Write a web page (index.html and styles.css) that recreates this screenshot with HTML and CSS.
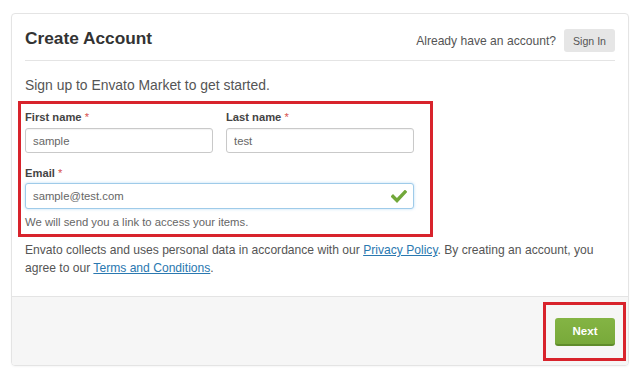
FILE: index.html
```html
<!DOCTYPE html>
<html lang="en">
<head>
  <meta charset="UTF-8" />
  <title>Create Account</title>
  <link rel="stylesheet" href="styles.css">
</head>
<body>

  <div class="card">
    <div class="card-head">
      <h1>Create Account</h1>
      <div class="signin">
        <span>Already have an account?</span>
        <button class="btn-signin">Sign In</button>
      </div>
    </div>

    <div class="card-body">
      <p class="intro">Sign up to Envato Market to get started.</p>

      <!-- highlighted group -->
      <div class="marked fields">
        <div class="row">
          <div class="field">
            <label>First name <span class="req">*</span></label>
            <input type="text" value="sample" />
          </div>
          <div class="field">
            <label>Last name <span class="req">*</span></label>
            <input type="text" value="test" />
          </div>
        </div>

        <div class="field email">
          <label>Email <span class="req">*</span></label>
          <div class="input-wrap">
            <input type="email" class="valid" value="sample@test.com" />
            <svg class="tick" viewBox="0 0 16 13" width="16" height="13">
              <polyline points="2,6.5 6,10.5 14,2" fill="none" stroke="#72a83a" stroke-width="3.4" stroke-linecap="square" />
            </svg>
          </div>
        </div>

        <p class="hint">We will send you a link to access your items.</p>
      </div>

      <p class="legal">
        Envato collects and uses personal data in accordance with our <a href="#">Privacy Policy</a>. By creating an account, you<br>
        agree to our <a href="#">Terms and Conditions</a>.
      </p>
    </div>

    <div class="card-foot">
      <div class="marked">
        <button class="btn-next">Next</button>
      </div>
    </div>
  </div>

</body>
</html>
```

FILE: styles.css
```css
:root {
  --text: #555;
  --title: #333;
  --line: #e4e4e4;
  --mark: #d8232c;
  --green: #7cad3d;
  --link: #2a78b0;
}
* {
  box-sizing: border-box;
}
body {
  margin: 0;
  padding: 13px 11px 11px;
  background: #fff;
  color: var(--text);
  font-family: "Liberation Sans", Arial, sans-serif;
}
.card {
  border: 1px solid var(--line);
  border-radius: 4px;
  overflow: hidden;
  box-shadow: 0 1px 2px rgba(0,0,0,0.04);
}
.card-head {
  display: flex;
  align-items: center;
  justify-content: space-between;
  margin: 0 13px;
  padding: 15px 0 8px;
  border-bottom: 1px solid var(--line);
}
h1 {
  align-self: flex-start;
  margin: 0;
  font-size: 17.3px;
  line-height: 19px;
  font-weight: 700;
  color: var(--title);
}
.signin {
  display: flex;
  align-items: center;
  gap: 8px;
  font-size: 12.1px;
}
.btn-signin {
  height: 23px;
  width: 51px;
  padding: 0;
  border: none;
  border-radius: 3px;
  background: #e6e6e6;
  color: #555;
  font-family: inherit;
  font-size: 10.6px;
}
.card-body {
  padding: 0 13px 19px;
}
.intro {
  margin: 14px 0 0;
  font-size: 13.9px;
  line-height: 20px;
}
.marked {
  border: 3px solid var(--mark);
}
.fields {
  width: 415px;
  margin: 6px 0 0 -7px;
  padding: 5px 16px 4px 4px;
}
.row {
  display: grid;
  grid-template-columns: 1fr 1fr;
  gap: 13px;
}
.field label {
  display: block;
  font-size: 11.2px;
  line-height: 16px;
  font-weight: 700;
  color: #444;
  margin-bottom: 3px;
}
.req {
  color: #d9534f;
  font-weight: 400;
}
.field input {
  display: block;
  width: 100%;
  height: 25px;
  padding: 0 7px;
  border: 1px solid #c9c9c9;
  border-radius: 3px;
  box-shadow: inset 0 1px 1px rgba(0,0,0,0.05);
  font-family: inherit;
  font-size: 11.3px;
  color: #666;
  outline: none;
}
.email {
  margin-top: 12px;
}
.email label {
  margin-bottom: 2px;
}
.input-wrap {
  position: relative;
}
.field input.valid {
  height: 26px;
  border-color: #9fcbe9;
  box-shadow: 0 0 3px rgba(102, 175, 233, 0.45);
}
.tick {
  position: absolute;
  right: 7px;
  top: 6.5px;
}
.hint {
  margin: 6px 0 0;
  font-size: 11.3px;
  line-height: 15px;
  color: #666;
}
.legal {
  margin: 4px 0 0;
  font-size: 12.1px;
  line-height: 18px;
}
.legal a {
  color: var(--link);
  text-decoration: underline;
}
.card-foot {
  display: flex;
  justify-content: flex-end;
  padding: 5px 2px 4px;
  background: #f6f6f6;
  border-top: 1px solid var(--line);
}
.card-foot .marked {
  padding: 13px 8px 12px 9px;
}
.btn-next {
  display: block;
  width: 60px;
  height: 28px;
  padding: 0;
  border: none;
  border-bottom: 2px solid #5f8c2b;
  border-radius: 3px;
  background: linear-gradient(#84b444, #78a93a);
  color: #fff;
  font-family: inherit;
  font-size: 11.5px;
  font-weight: 700;
}
```
